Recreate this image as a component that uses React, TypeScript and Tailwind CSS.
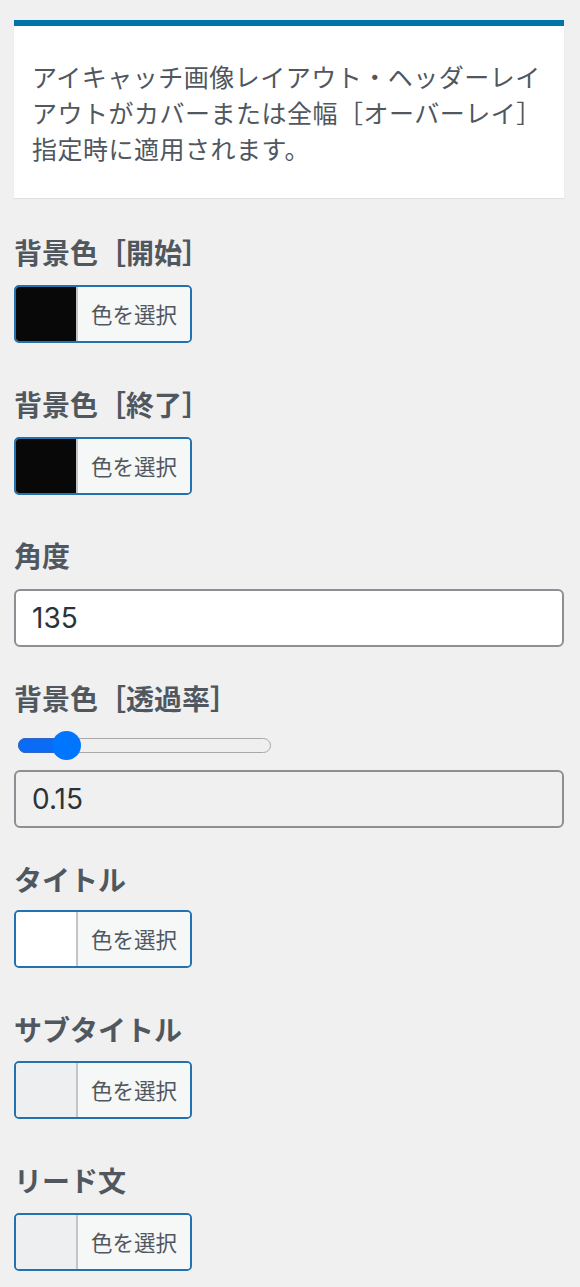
import React from "react";

const font = { fontFamily: '"Noto Sans CJK JP", "Noto Sans", sans-serif' };

function Label({ children, mb = "mb-[14px]" }: { children: React.ReactNode; mb?: string }) {
  return (
    <div className={`h-[38px] text-[28px] font-bold leading-[38px] text-[#50575e] ${mb}`}>{children}</div>
  );
}

function ColorButton({ swatch }: { swatch: string }) {
  return (
    <div className="flex h-[58px] w-[178px] overflow-hidden rounded-[5px] border-2 border-[#2271b1]">
      <div className={`w-[62px] border-r-2 border-[#c3c4c7] ${swatch}`} />
      <div className="flex flex-1 items-center justify-center bg-[#f6f7f7] text-[21.5px] text-[#50575e]">
        色を選択
      </div>
    </div>
  );
}

export default function App() {
  return (
    <div className="min-h-[1287px] bg-[#f0f0f1] pb-[14px] pl-[14px] pr-[16px] pt-[20px]" style={font}>
      <div className="mb-[35px] border-t-[6px] border-[#0073aa] bg-white px-[18px] py-[32px] shadow-[0_1px_1px_rgba(0,0,0,0.06)]">
        <div className="text-[25px] leading-[36px] tracking-[0.5px] text-[#50575e]">
          <span className="block whitespace-nowrap">アイキャッチ画像レイアウト・ヘッダーレイ</span>
          <span className="block whitespace-nowrap">アウトがカバーまたは全幅［オーバーレイ］</span>
          <span className="block whitespace-nowrap">指定時に適用されます。</span>
        </div>
      </div>

      <div className="mb-[42px]">
        <Label>背景色［開始］</Label>
        <ColorButton swatch="bg-[#080808]" />
      </div>

      <div className="mb-[41px]">
        <Label>背景色［終了］</Label>
        <ColorButton swatch="bg-[#080808]" />
      </div>

      <div className="mb-[32px]">
        <Label mb="mb-[15px]">角度</Label>
        <div className="flex h-[58px] items-center rounded-[6px] border-2 border-[#8c8f94] bg-white pl-[16px] text-[28px] text-[#2c3338]" style={{ fontFamily: 'Inter, "Noto Sans", sans-serif' }}>
          135
        </div>
      </div>

      <div className="mb-[32px]">
        <Label>背景色［透過率］</Label>
        <div className="relative mb-[9px] ml-[4px] h-[30px] w-[253px]">
          <div className="absolute left-0 right-0 top-[7px] h-[15px] rounded-full border-[1.5px] border-[#a9a9a9] bg-[#efefef]" />
          <div className="absolute left-0 top-[7px] h-[15px] w-[50px] rounded-l-full border-[1.5px] border-r-0 border-[#2f66c8] bg-[#0a6cf5]" />
          <div className="absolute left-[34px] top-0 h-[29px] w-[29px] rounded-full bg-[#0075ff]" />
        </div>
        <div className="flex h-[58px] items-center rounded-[6px] border-2 border-[#8c8f94] bg-[#f0f0f1] pl-[16px] text-[28px] text-[#2c3338]" style={{ fontFamily: 'Inter, "Noto Sans", sans-serif' }}>
          0.15
        </div>
      </div>

      <div className="mb-[42px]">
        <Label mb="mb-[12px]">タイトル</Label>
        <ColorButton swatch="bg-white" />
      </div>

      <div className="mb-[42px]">
        <Label mb="mb-[13px]">サブタイトル</Label>
        <ColorButton swatch="bg-[#eeeff1]" />
      </div>

      <div>
        <Label mb="mb-[14px]">リード文</Label>
        <ColorButton swatch="bg-[#eeeff1]" />
      </div>
    </div>
  );
}
